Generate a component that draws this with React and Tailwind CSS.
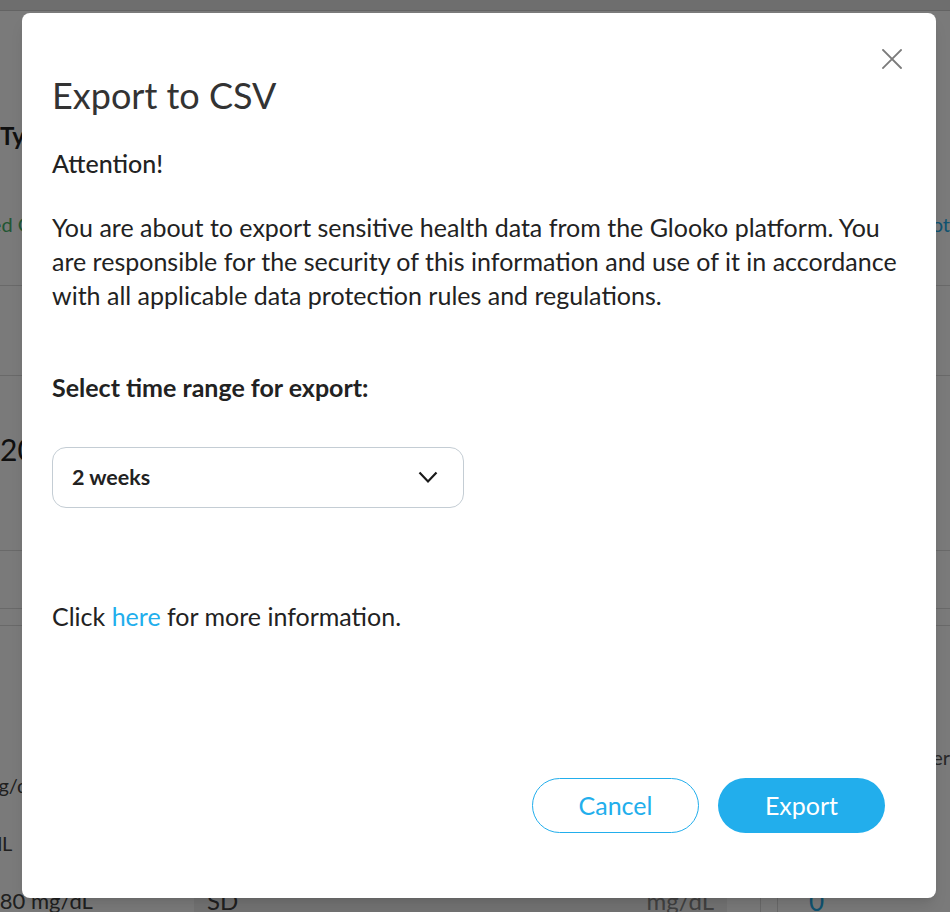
import { useState } from "react";

const ExportModal = () => {
    const [range] = useState("2 weeks");

    return (
        <div className="absolute left-[22px] top-[13px] flex h-[885px] w-[914px] flex-col rounded-lg bg-white px-[30px] pt-[60px] pb-[65px] shadow-lg">
            {/* close */}
            <button className="absolute right-[34px] top-[36px] h-[20px] w-[20px]">
                <svg viewBox="0 0 20 20" className="h-[20px] w-[20px]" fill="none" stroke="#7b7b7b" strokeWidth="1.8" strokeLinecap="square">
                    <path d="M1 1 L19 19 M19 1 L1 19" />
                </svg>
            </button>

            <h1 className="text-[36px] leading-[44px] text-[#333]">Export to CSV</h1>

            <p className="mt-[29px] text-[25px] font-medium leading-[34px] text-[#222]">Attention!</p>

            <p className="mt-[30px] text-[25px] leading-[34px] text-[#222]">
                You are about to export sensitive health data from the Glooko platform. You are responsible for the security of this information and use of it in accordance with all applicable data protection rules and regulations.
            </p>

            <p className="mt-[58px] text-[25px] font-bold leading-[34px] text-[#222]">Select time range for export:</p>

            <button className="mt-[43px] flex h-[61px] w-[412px] items-center justify-between rounded-[14px] border border-[#c4cdd4] pl-[19px] pr-[25px]">
                <span className="text-[21.5px] font-bold text-[#222]">{range}</span>
                <svg viewBox="0 0 20 13" className="h-[13px] w-[20px]" fill="none" stroke="#1a1a1a" strokeWidth="2.2">
                    <path d="M1.5 1.5 L10 10.5 L18.5 1.5" />
                </svg>
            </button>

            <p className="mt-[91px] text-[25px] leading-[34px] text-[#222]">
                Click <a className="text-[#22aeec]">here</a> for more information.
            </p>

            <div className="mt-auto mr-[21px] flex justify-end gap-[19px]">
                <button className="h-[55px] w-[167px] rounded-full border border-[#22aeec] bg-white text-[25px] text-[#22aeec]">Cancel</button>
                <button className="h-[55px] w-[167px] rounded-full bg-[#22aeec] text-[25px] text-white">Export</button>
            </div>
        </div>
    );
};

export default function App() {
    return (
        <div className="relative h-[912px] w-[950px] overflow-hidden bg-white font-[Lato,sans-serif]">
            {/* page behind the dialog */}
            <div className="flex flex-col">
                <div className="h-[11px] border-b border-[#cfcfcf] bg-[#e6e6e6]" />
                <div className="flex h-[275px] flex-col border-b border-[#dcdcdc] pt-[110px]">
                    <div className="text-[24px] font-bold leading-[30px] text-[#222]">Type 1</div>
                    <div className="mt-[60px] flex items-center justify-between">
                        <span className="-ml-[45px] text-[20px] leading-[26px] text-[#46b36a]">Linked CGM</span>
                        <span className="text-[20px] leading-[26px] text-[#22aeec]">Snapshot</span>
                    </div>
                </div>
                <div className="h-[90px] border-b border-[#dcdcdc]" />
                <div className="flex h-[175px] items-start border-b border-[#dcdcdc] pt-[55px]">
                    <span className="text-[30px] leading-[36px] text-[#222]">2025</span>
                </div>
                <div className="h-[58px] border-b border-[#dcdcdc]" />
                <div className="h-[17px] border-b border-[#dcdcdc]" />
                <div className="flex flex-col pt-[118px]">
                    <div className="flex justify-end">
                        <span className="text-[20px] leading-[26px] text-[#555]">Number</span>
                    </div>
                    <span className="-ml-[18px] mt-[2px] text-[20px] leading-[26px] text-[#444]">mg/dL</span>
                    <span className="-ml-[9px] mt-[32px] text-[20px] leading-[26px] text-[#444]">dL</span>
                    <div className="mt-[30px] flex items-start">
                        <span className="-ml-[13px] w-[207px] text-[22px] leading-[30px] text-[#444]">180 mg/dL</span>
                        <div className="flex h-[40px] w-[533px] justify-between bg-[#f1f1f1] px-[13px]">
                            <span className="text-[24px] leading-[30px] text-[#444]">SD</span>
                            <span className="text-[24px] leading-[30px] text-[#888]">mg/dL</span>
                        </div>
                        <div className="ml-[33px] h-[40px] w-[18px] border-x border-[#dcdcdc]" />
                        <span className="ml-[31px] text-[26px] leading-[30px] text-[#22aeec]">0</span>
                    </div>
                </div>
            </div>

            <div className="absolute inset-0 bg-black/[0.52]" />

            <ExportModal />
        </div>
    );
}
